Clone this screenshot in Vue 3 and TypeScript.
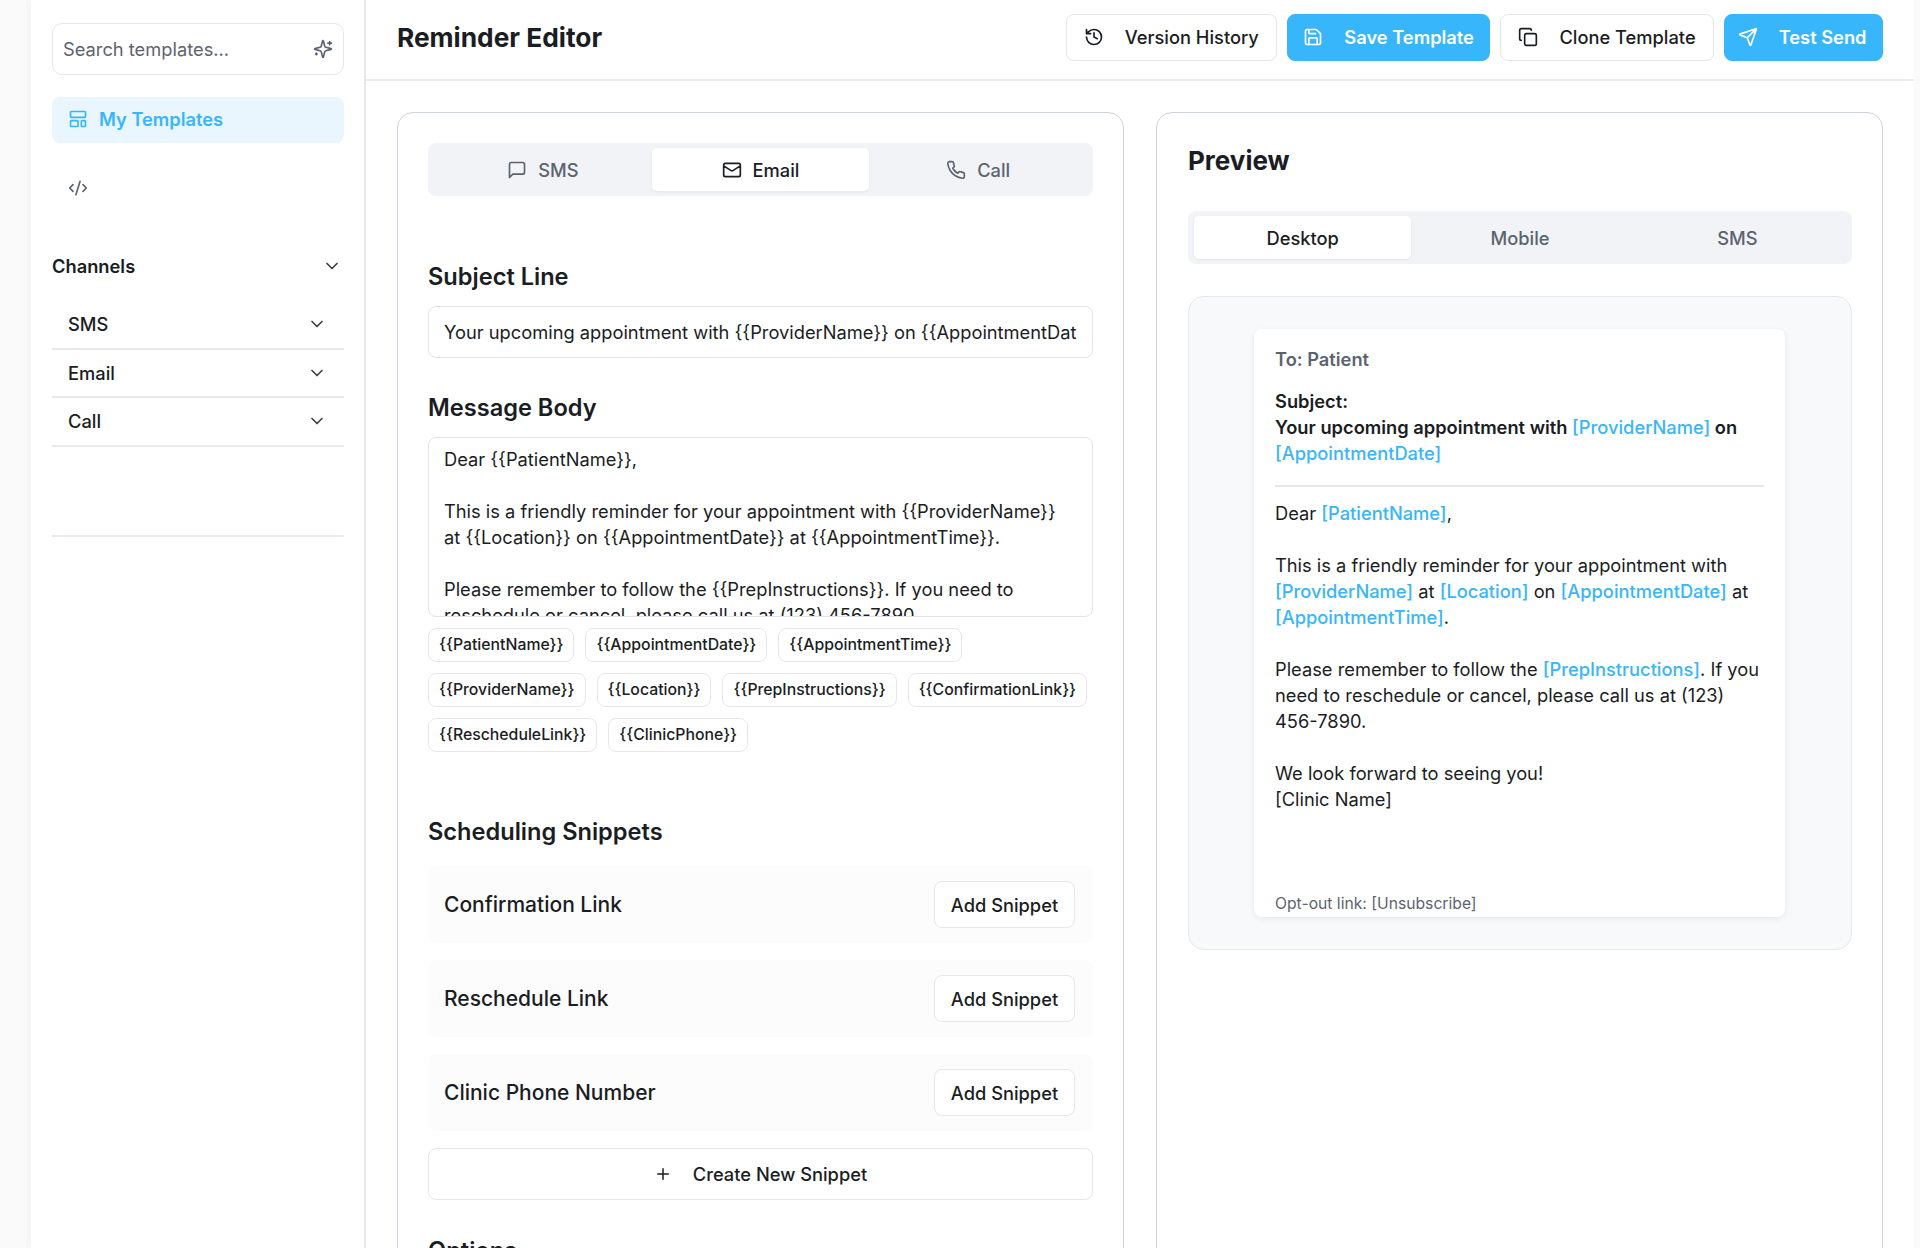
<template>
  <div class="page">
    <aside class="sidebar">
      <div class="search">
        <input class="search-input" type="text" placeholder="Search templates..." />
        <svg class="ico search-ico" viewBox="0 0 24 24"><path :d="icons.sparkles" /></svg>
      </div>
      <a class="nav-active">
        <svg class="ico" viewBox="0 0 24 24"><path :d="icons.layout" /></svg>
        My Templates
      </a>
      <div class="code-row">
        <svg class="ico code-ico" viewBox="0 0 24 24"><path :d="icons.code" /></svg>
      </div>
      <div class="channels-head">
        <span>Channels</span>
        <svg class="ico chev" viewBox="0 0 24 24"><path :d="icons.chevron" /></svg>
      </div>
      <div v-for="c in channels" :key="c" class="channel">
        <span>{{ c }}</span>
        <svg class="ico chev" viewBox="0 0 24 24"><path :d="icons.chevron" /></svg>
      </div>
      <div class="side-rule"></div>
    </aside>

    <div class="main">
      <header class="topbar">
        <h1>Reminder Editor</h1>
        <div class="actions">
          <button v-for="a in actions" :key="a.label" :class="['action', { primary: a.primary }]">
            <svg class="ico" viewBox="0 0 24 24"><path :d="icons[a.icon]" /></svg>
            {{ a.label }}
          </button>
        </div>
      </header>

      <div class="columns">
        <section class="card">
          <div class="tabs">
            <div v-for="t in channelTabs" :key="t.label" :class="['tab', { active: t.label === 'Email' }]">
              <svg class="ico" viewBox="0 0 24 24"><path :d="icons[t.icon]" /></svg>
              {{ t.label }}
            </div>
          </div>

          <h2 class="subject-title">Subject Line</h2>
          <input class="field" type="text" :value="subject" readonly />

          <h2 class="body-title">Message Body</h2>
          <textarea class="field area" :value="body" readonly></textarea>
          <div class="chips">
            <span v-for="v in variables" :key="v" class="chip">{{ wrap(v) }}</span>
          </div>

          <h2 class="snippets-title">Scheduling Snippets</h2>
          <div class="snippets">
            <div v-for="s in snippets" :key="s" class="snippet">
              <span>{{ s }}</span>
              <button class="add">Add Snippet</button>
            </div>
          </div>
          <button class="create">
            <svg class="ico" viewBox="0 0 24 24"><path :d="icons.plus" /></svg>
            Create New Snippet
          </button>

          <h2 class="options-title">Options</h2>
        </section>

        <section class="card">
          <h2 class="preview-title">Preview</h2>
          <div class="tabs">
            <div v-for="t in previewTabs" :key="t" :class="['tab', { active: t === 'Desktop' }]">{{ t }}</div>
          </div>
          <div class="frame">
            <div class="mail">
              <div class="to">To: Patient</div>
              <div class="subject">
                Subject:<br />
                Your upcoming appointment with <em>[ProviderName]</em> on <em>[AppointmentDate]</em>
              </div>
              <div class="rule"></div>
              <p>Dear <em>[PatientName]</em>,</p>
              <p>
                This is a friendly reminder for your appointment with <em>[ProviderName]</em> at
                <em>[Location]</em> on <em>[AppointmentDate]</em> at <em>[AppointmentTime]</em>.
              </p>
              <p>
                Please remember to follow the <em>[PrepInstructions]</em>. If you need to reschedule or
                cancel, please call us at (123) 456-7890.
              </p>
              <p>We look forward to seeing you!<br />[Clinic Name]</p>
              <div class="optout">Opt-out link: [Unsubscribe]</div>
            </div>
          </div>
        </section>
      </div>
    </div>
  </div>
</template>

<script setup lang="ts">
// Lucide outlines, merged into one path each so a single <path> can draw them
const icons: Record<string, string> = {
  sparkles:
    'M9.937 15.5A2 2 0 0 0 8.5 14.063l-6.135-1.582a.5.5 0 0 1 0-.962L8.5 9.936A2 2 0 0 0 9.937 8.5l1.582-6.135a.5.5 0 0 1 .963 0L14.063 8.5A2 2 0 0 0 15.5 9.937l6.135 1.581a.5.5 0 0 1 0 .964L15.5 14.063a2 2 0 0 0-1.437 1.437l-1.582 6.135a.5.5 0 0 1-.963 0z M20 3v4 M22 5h-4 M4 17v2 M5 18H3',
  layout:
    'M4 3h16a1 1 0 0 1 1 1v5a1 1 0 0 1-1 1H4a1 1 0 0 1-1-1V4a1 1 0 0 1 1-1z M4 14h7a1 1 0 0 1 1 1v5a1 1 0 0 1-1 1H4a1 1 0 0 1-1-1v-5a1 1 0 0 1 1-1z M17 14h3a1 1 0 0 1 1 1v5a1 1 0 0 1-1 1h-3a1 1 0 0 1-1-1v-5a1 1 0 0 1 1-1z',
  code: 'm18 16 4-4-4-4 M6 8l-4 4 4 4 M14.5 4l-5 16',
  chevron: 'm6 9 6 6 6-6',
  history: 'M3 12a9 9 0 1 0 9-9 9.75 9.75 0 0 0-6.74 2.74L3 8 M3 3v5h5 M12 7v5l4 2',
  save: 'M15.2 3a2 2 0 0 1 1.4.6l3.8 3.8a2 2 0 0 1 .6 1.4V19a2 2 0 0 1-2 2H5a2 2 0 0 1-2-2V5a2 2 0 0 1 2-2z M17 21v-7a1 1 0 0 0-1-1H8a1 1 0 0 0-1 1v7 M7 3v4a1 1 0 0 0 1 1h7',
  copy: 'M10 8h10a2 2 0 0 1 2 2v10a2 2 0 0 1-2 2H10a2 2 0 0 1-2-2V10a2 2 0 0 1 2-2z M4 16c-1.1 0-2-.9-2-2V4c0-1.1.9-2 2-2h10c1.1 0 2 .9 2 2',
  send: 'M14.536 21.686a.5.5 0 0 0 .937-.024l6.5-19a.496.496 0 0 0-.635-.635l-19 6.5a.5.5 0 0 0-.024.937l7.93 3.18a2 2 0 0 1 1.112 1.11z M21.854 2.147l-10.94 10.939',
  message: 'M21 15a2 2 0 0 1-2 2H7l-4 4V5a2 2 0 0 1 2-2h14a2 2 0 0 1 2 2z',
  mail: 'M4 4h16a2 2 0 0 1 2 2v12a2 2 0 0 1-2 2H4a2 2 0 0 1-2-2V6a2 2 0 0 1 2-2z M22 7l-8.97 5.7a1.94 1.94 0 0 1-2.06 0L2 7',
  phone:
    'M22 16.92v3a2 2 0 0 1-2.18 2 19.79 19.79 0 0 1-8.63-3.07 19.5 19.5 0 0 1-6-6 19.79 19.79 0 0 1-3.07-8.67A2 2 0 0 1 4.11 2h3a2 2 0 0 1 2 1.72 12.84 12.84 0 0 0 .7 2.81 2 2 0 0 1-.45 2.11L8.09 9.91a16 16 0 0 0 6 6l1.27-1.27a2 2 0 0 1 2.11-.45 12.84 12.84 0 0 0 2.81.7A2 2 0 0 1 22 16.92z',
  plus: 'M5 12h14 M12 5v14',
}

const channels = ['SMS', 'Email', 'Call']

const actions = [
  { label: 'Version History', icon: 'history', primary: false },
  { label: 'Save Template', icon: 'save', primary: true },
  { label: 'Clone Template', icon: 'copy', primary: false },
  { label: 'Test Send', icon: 'send', primary: true },
]

const channelTabs = [
  { label: 'SMS', icon: 'message' },
  { label: 'Email', icon: 'mail' },
  { label: 'Call', icon: 'phone' },
]
const previewTabs = ['Desktop', 'Mobile', 'SMS']

const subject = 'Your upcoming appointment with {{ProviderName}} on {{AppointmentDate}}'
const body = `Dear {{PatientName}},

This is a friendly reminder for your appointment with {{ProviderName}} at {{Location}} on {{AppointmentDate}} at {{AppointmentTime}}.

Please remember to follow the {{PrepInstructions}}. If you need to reschedule or cancel, please call us at (123) 456-7890.

We look forward to seeing you!
[Clinic Name]`

const variables = [
  'PatientName',
  'AppointmentDate',
  'AppointmentTime',
  'ProviderName',
  'Location',
  'PrepInstructions',
  'ConfirmationLink',
  'RescheduleLink',
  'ClinicPhone',
]
const wrap = (v: string) => '{{' + v + '}}'

const snippets = ['Confirmation Link', 'Reschedule Link', 'Clinic Phone Number']
</script>

<style>
html,
body {
  margin: 0;
  overflow: hidden;
  background: #fafafa;
}
</style>

<style scoped>
.page {
  display: flex;
  height: 1248px;
  overflow: hidden;
  padding: 0 6px 0 31px;
  box-sizing: border-box;
  font-family: Inter, "Liberation Sans", sans-serif;
  font-size: 18.3px;
  color: #1a1d23;
}

.ico {
  width: 20px;
  height: 20px;
  flex: none;
  fill: none;
  stroke: currentColor;
  stroke-width: 2;
  stroke-linecap: round;
  stroke-linejoin: round;
}

/* Barra lateral */
.sidebar {
  width: 335px;
  flex: none;
  box-sizing: border-box;
  padding: 23px 20px 0 21px;
  background: #fff;
  border-right: 2px solid #e6e8ee;
  box-shadow: -3px 0 6px rgba(0, 0, 0, 0.03);
}

.search {
  display: flex;
  align-items: center;
  height: 52px;
  box-sizing: border-box;
  padding: 0 10px;
  border: 1px solid #e5e7eb;
  border-radius: 10px;
}

.search-input {
  flex: 1;
  min-width: 0;
  border: none;
  outline: none;
  padding: 0;
  font: inherit;
  color: #1a1d23;
}

.search-input::placeholder {
  color: #5c6370;
  opacity: 1;
}

.search-ico {
  color: #5c6370;
}

.nav-active {
  display: flex;
  align-items: center;
  gap: 11px;
  height: 46px;
  box-sizing: border-box;
  margin-top: 22px;
  padding: 0 16px 2px;
  border-radius: 8px;
  background: #e9f6fe;
  color: #38b6fb;
  font-weight: 600;
}

.code-row {
  display: flex;
  align-items: center;
  height: 20px;
  margin-top: 35px;
  padding-left: 16px;
  color: #5c6370;
}

.code-ico {
  width: 20px;
  height: 20px;
}

.channels-head {
  display: flex;
  align-items: center;
  justify-content: space-between;
  height: 24px;
  margin-top: 56px;
  padding-right: 2px;
  font-weight: 600;
}

.channel {
  display: flex;
  align-items: center;
  justify-content: space-between;
  height: 46.5px;
  padding: 0 17px 0 16px;
  border-bottom: 2px solid #e8eaf0;
  font-weight: 500;
}

.channels-head + .channel {
  margin-top: 23px;
}

.chev {
  color: #3a3f4a;
}

.side-rule {
  margin-top: 88px;
  border-bottom: 2px solid #e8eaf0;
}

/* Cabecera */
.main {
  flex: 1;
  min-width: 0;
  background: #fff;
}

.topbar {
  display: flex;
  align-items: center;
  justify-content: space-between;
  height: 74px;
  padding: 0 31px 5px 31px;
  border-bottom: 2px solid #e8eaf0;
}

h1 {
  margin: 0;
  font-size: 26.3px;
  font-weight: 700;
}

.actions {
  display: flex;
  gap: 10px;
}

.action {
  display: flex;
  align-items: center;
  gap: 21px;
  height: 47px;
  padding: 0 17px;
  border: 1px solid #e5e7eb;
  border-radius: 8px;
  background: #fff;
  color: #1a1d23;
  font: inherit;
  font-weight: 500;
}

.action.primary {
  padding: 0 15.5px;
  border-color: #38b6fb;
  background: #38b6fb;
  color: #fff;
  font-weight: 600;
}

.action.primary:last-child {
  padding-left: 13px;
}

/* Tarjetas */
.columns {
  display: grid;
  grid-template-columns: 1fr 1fr;
  gap: 32px;
  padding: 31px 31px 0;
}

.card {
  height: 1300px;
  box-sizing: border-box;
  padding: 30px;
  border: 1.5px solid #cfd3de;
  border-radius: 16px;
  background: #fff;
}

.card + .card {
  padding-left: 31px;
}

h2 {
  margin: 0;
  font-size: 23.6px;
  font-weight: 600;
}

.tabs {
  display: grid;
  grid-template-columns: repeat(3, 1fr);
  height: 53px;
  box-sizing: border-box;
  padding: 5px 6px;
  border-radius: 8px;
  background: #f2f3f6;
}

.tab {
  display: flex;
  align-items: center;
  justify-content: center;
  gap: 11px;
  border-radius: 5px;
  color: #5c6370;
  font-weight: 500;
}

.tab.active {
  background: #fff;
  color: #1a1d23;
  box-shadow: 0 1px 3px rgba(0, 0, 0, 0.06);
}

.subject-title {
  margin-top: 66px;
  line-height: 30px;
}

.field {
  display: block;
  width: 100%;
  box-sizing: border-box;
  height: 52px;
  margin-top: 14px;
  padding: 0 15px;
  border: 1px solid #e2e4ea;
  border-radius: 8px;
  outline: none;
  background: #fff;
  color: #1a1d23;
  font: inherit;
}

.body-title {
  margin-top: 35px;
  line-height: 30px;
}

.area {
  height: 180px;
  margin-top: 14px;
  padding: 8px 15px;
  overflow: hidden;
  resize: none;
  line-height: 26px;
}

.chips {
  display: flex;
  flex-wrap: wrap;
  gap: 11px;
  margin-top: 11px;
}

.chip {
  height: 34px;
  box-sizing: border-box;
  padding: 0 10px;
  border: 1px solid #e5e7eb;
  border-radius: 8px;
  font-size: 15.8px;
  font-weight: 500;
  line-height: 32px;
}

.snippets-title {
  margin-top: 65px;
  line-height: 30px;
}

.snippets {
  display: flex;
  flex-direction: column;
  gap: 17px;
  margin-top: 19px;
}

.snippet {
  display: flex;
  align-items: center;
  justify-content: space-between;
  height: 77px;
  padding: 0 18px 0 16px;
  border-radius: 8px;
  background: #fcfcfd;
  font-size: 21px;
  font-weight: 500;
}

.add {
  width: 141px;
  height: 47px;
  padding: 0;
  border: 1px solid #e5e7eb;
  border-radius: 8px;
  background: #fff;
  color: #1a1d23;
  font: inherit;
  font-size: 18.3px;
  font-weight: 500;
}

.create {
  display: flex;
  align-items: center;
  justify-content: center;
  gap: 21px;
  width: 100%;
  height: 52px;
  margin-top: 17px;
  border: 1px solid #e5e7eb;
  border-radius: 8px;
  background: #fff;
  color: #1a1d23;
  font: inherit;
  font-weight: 500;
}

.create .ico {
  width: 18px;
  height: 18px;
}

.options-title {
  margin-top: 36px;
  line-height: 30px;
}

/* Vista previa */
.preview-title {
  margin-bottom: 32px;
  font-size: 26px;
  font-weight: 700;
  line-height: 36px;
}

.frame {
  height: 654px;
  box-sizing: border-box;
  margin-top: 32px;
  padding: 32px 66px 32px 65px;
  border: 1.5px solid #e6e8ee;
  border-radius: 16px;
  background: #f8f9fb;
}

.mail {
  display: flex;
  flex-direction: column;
  height: 588px;
  box-sizing: border-box;
  padding: 17px 21px 0;
  border-radius: 8px;
  background: #fff;
  box-shadow: 0 2px 6px rgba(0, 0, 0, 0.07);
  line-height: 26px;
}

.to {
  color: #5c6370;
  font-weight: 600;
}

.subject {
  margin-top: 16px;
  font-weight: 600;
}

em {
  font-style: normal;
  font-weight: 500;
  color: #38b6fb;
}

.rule {
  margin: 19px 0 13px;
  border-bottom: 2px solid #e5e7eb;
}

p {
  margin: 0 0 26px;
}

.optout {
  margin-top: auto;
  color: #5c6370;
  font-size: 15.7px;
  line-height: 26px;
}
</style>
